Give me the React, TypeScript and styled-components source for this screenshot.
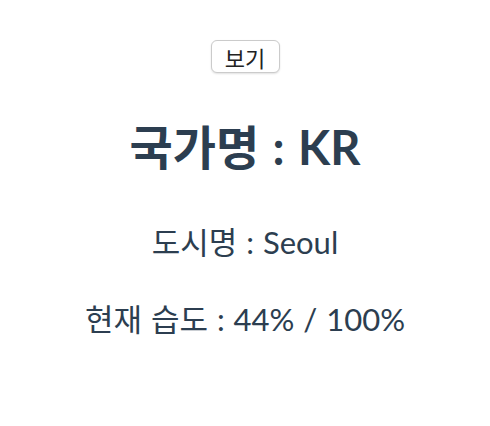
import React from 'react';
import styled, { createGlobalStyle } from 'styled-components';

const GlobalStyle = createGlobalStyle`
  html, body {
    margin: 0;
    padding: 0;
    background: #ffffff;
  }
`;

const Page = styled.div`
  display: flex;
  flex-direction: column;
  align-items: center;
  padding-top: 40px;
  font-family: Lato, "Noto Sans CJK KR", sans-serif;
  color: #2c3e50;
  text-align: center;
`;

const ViewButton = styled.button`
  box-sizing: border-box;
  width: 69px;
  height: 33px;
  padding: 0;
  font-family: "Noto Sans CJK KR", sans-serif;
  font-size: 22px;
  line-height: 1;
  color: #222;
  background: #fff;
  border: 1px solid #cbcbcb;
  border-radius: 6px;
  box-shadow: 0 1px 2px rgba(0, 0, 0, 0.12);
  cursor: pointer;
`;

const Title = styled.h1`
  margin: 46px 0 0;
  font-size: 47px;
  font-weight: 700;
  line-height: 56px;
  word-spacing: 2px;
`;

const Info = styled.p<{ gap: number }>`
  margin: ${p => p.gap}px 0 0;
  font-size: 31px;
  font-weight: 400;
  line-height: 38px;
  word-spacing: 1px;
`;

export default function App() {
  return (
    <>
      <GlobalStyle />
      <Page>
        <ViewButton>보기</ViewButton>
        <Title>국가명 : KR</Title>
        <Info gap={48}>도시명 : Seoul</Info>
        <Info gap={39}>현재 습도 : 44% / 100%</Info>
      </Page>
    </>
  );
}
